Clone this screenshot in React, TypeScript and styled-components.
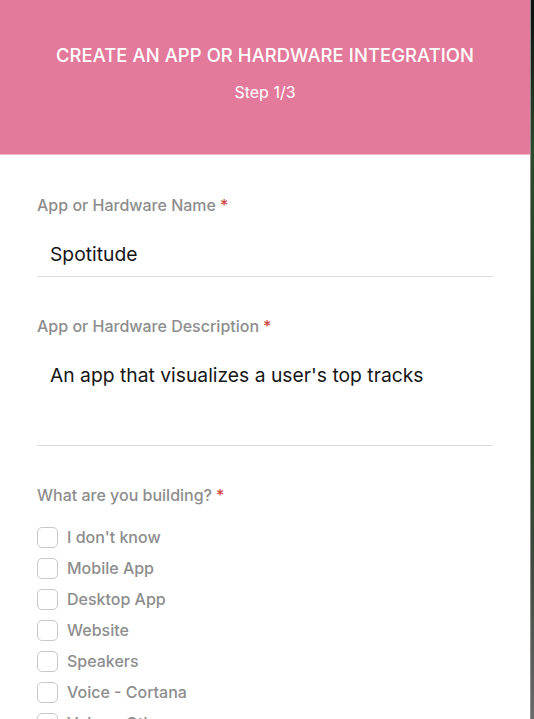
import React from "react";
import styled, { createGlobalStyle } from "styled-components";

const Global = createGlobalStyle`
  html, body {
    margin: 0;
    padding: 0;
    height: 100%;
    background: #1d2e1d;
  }
  body {
    font-family: Inter, "Noto Sans", "Liberation Sans", sans-serif;
    -webkit-font-smoothing: antialiased;
  }
  #root { height: 100%; }
`;

const Stage = styled.div`
  display: flex;
  align-items: flex-start;
  height: 719px;
  overflow: hidden;
  background: linear-gradient(to bottom, #111 0px, #111 14px, #2c4a2c 150px, #21401f 420px, #3e4b3e 560px, #6a6a6a 719px);
`;

const Modal = styled.div`
  width: 530px;
  min-height: 719px;
  flex: none;
  background: #fff;
  border-right: 1px solid #8d8d8d;
  display: flex;
  flex-direction: column;
`;

const Header = styled.header`
  flex: none;
  height: 155px;
  background: #e37a9b;
  border-bottom: 1px solid #efb9ca;
  display: flex;
  flex-direction: column;
  align-items: center;
  padding-top: 43px;
  box-sizing: border-box;
  color: #fff;
`;

const Title = styled.h1`
  margin: 0;
  font-size: 18.4px;
  line-height: 24px;
  font-weight: 500;
  letter-spacing: 0.1px;
  text-transform: uppercase;
`;

const Step = styled.div`
  margin-top: 15px;
  font-size: 16px;
  line-height: 20px;
  font-weight: 400;
`;

const Body = styled.div`
  padding: 40px 37px 0 37px;
  display: flex;
  flex-direction: column;
  gap: 39px;
`;

const Field = styled.div`
  display: flex;
  flex-direction: column;
`;

const Label = styled.label`
  font-size: 16px;
  line-height: 20px;
  color: #8d8d8d;
  font-weight: 500;
`;

const Req = styled.span`
  color: #d0453f;
  margin-left: 4px;
`;

const TextValue = styled.div<{ $tall?: boolean }>`
  margin-top: 27px;
  padding: 0 13px ${(p) => (p.$tall ? "58px" : "10px")};
  font-size: 19.3px;
  line-height: 24px;
  color: #161616;
  border-bottom: 1px solid #dcdcdc;
`;

const Options = styled.div`
  margin-top: 22px;
  display: flex;
  flex-direction: column;
  gap: 10px;
`;

const Option = styled.div`
  display: flex;
  align-items: center;
  gap: 9px;
  height: 21px;
`;

const Box = styled.span`
  width: 21px;
  height: 21px;
  box-sizing: border-box;
  border: 1px solid #c9c9c9;
  border-radius: 5px;
  flex: none;
`;

const OptionText = styled.span`
  font-size: 16px;
  line-height: 21px;
  color: #8d8d8d;
  font-weight: 500;
`;

const options = [
  "I don't know",
  "Mobile App",
  "Desktop App",
  "Website",
  "Speakers",
  "Voice - Cortana",
  "Voice - Other",
];

export default function App() {
  return (
    <>
      <Global />
      <Stage>
        <Modal>
          <Header>
            <Title>Create an app or hardware integration</Title>
            <Step>Step 1/3</Step>
          </Header>
          <Body>
            <Field>
              <Label>
                App or Hardware Name<Req>*</Req>
              </Label>
              <TextValue>Spotitude</TextValue>
            </Field>
            <Field>
              <Label>
                App or Hardware Description<Req>*</Req>
              </Label>
              <TextValue $tall>An app that visualizes a user's top tracks</TextValue>
            </Field>
            <Field>
              <Label>
                What are you building?<Req>*</Req>
              </Label>
              <Options>
                {options.map((o) => (
                  <Option key={o}>
                    <Box />
                    <OptionText>{o}</OptionText>
                  </Option>
                ))}
              </Options>
            </Field>
          </Body>
        </Modal>
      </Stage>
    </>
  );
}
